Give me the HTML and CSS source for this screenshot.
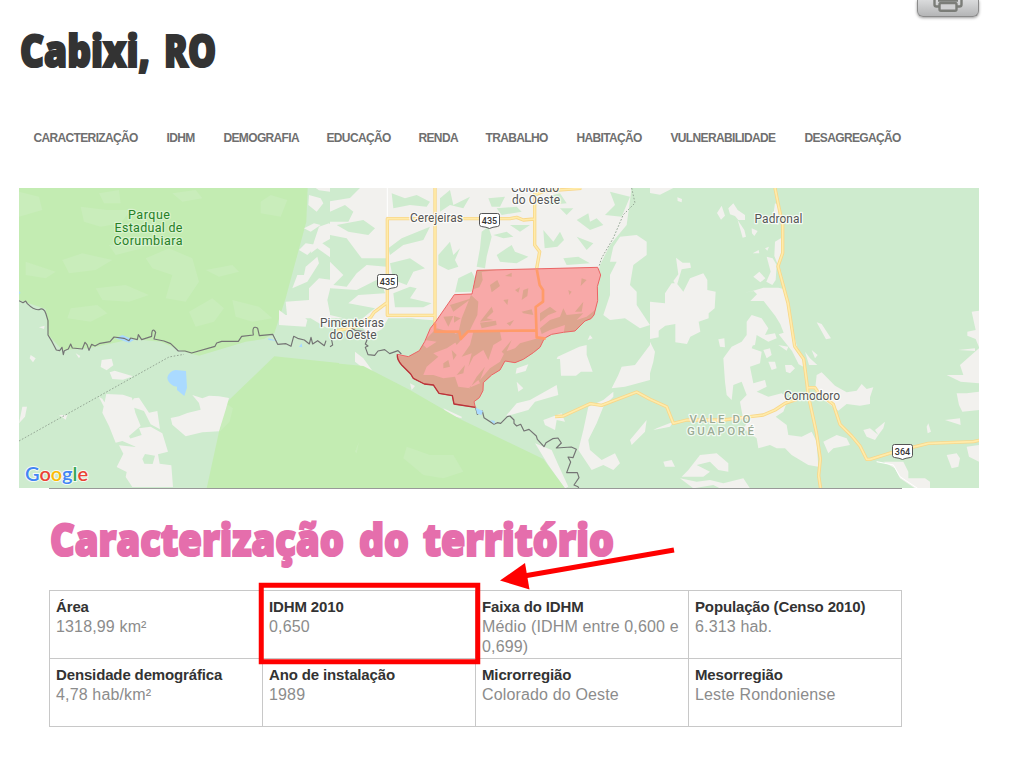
FILE: index.html
```html
<!DOCTYPE html>
<html lang="pt-BR">
<head>
<meta charset="utf-8">
<title>Cabixi, RO</title>
<link rel="stylesheet" href="styles.css">
</head>
<body>
<div class="page">
  <header class="header">
    <h1 class="title"><svg width="220" height="60"><text y="44"><tspan x="1" textLength="130" lengthAdjust="spacingAndGlyphs">Cabixi,</tspan> <tspan x="145" textLength="52" lengthAdjust="spacingAndGlyphs">RO</tspan></text></svg></h1>
    <button class="print" aria-label="Imprimir">
      <svg width="30" height="16" viewBox="0 0 30 16"><path d="M1.500 0v4.500q0 2 2 2H7M28.500 0v4.500q0 2-2 2H23M5 .5h20" /><rect x="6.500" y="3" width="17" height="7.800" rx="1.500"/></svg>
    </button>
  </header>
  <nav class="nav">
    <a>CARACTERIZAÇÃO</a><a>IDHM</a><a>DEMOGRAFIA</a><a>EDUCAÇÃO</a><a>RENDA</a><a>TRABALHO</a><a>HABITAÇÃO</a><a>VULNERABILIDADE</a><a>DESAGREGAÇÃO</a>
  </nav>
  <svg class="map" width="960" height="300" viewBox="19 188 960 300">
    <defs>
      <clipPath id="area-clip"><path d="M261 31L623 22 632 45 622 80 623 122 612 165 603 176 585 183 555 213 520 217 485 223 463 235 450 262 430 278 400 298 375 308 345 303 330 330 305 345 280 368 279 392 268 413 252 425 256 442 192 432 187 407 147 400 130 375 103 372 70 355 62 342 35 315Q20 298 22 283L55 290 88 272 104 245 121 205 137 185 193 104 246 102Z"/></clipPath>
    </defs>
    <rect class="forest" x="19" y="188" width="960" height="300"/>
    <!-- west -->
    <g transform="translate(19 185) scale(.33333)">
      <path class="park" d="M0 9H866L862 110 835 210 800 340 766 445 735 462 680 470 540 512 495 500 425 470 340 462 210 490 130 495 88 450 80 372 0 345Z"/>
      <path class="park" d="M766 514L960 534V910H563L600 740 620 655Z"/>
      <path class="parklight" d="M185 65l80 10 70 0-30 40-60 10-50-15zM0 20l60 15 10 40-70 20zM130 225l60-20 90 20-50 30-80 10zM380 220l70-30 70 30 20 70-40 60-60-10 20-70-60-20zM230 310l90-10 70 30-60 20-80-5zM155 370l80-10 30 25-50 25-70-10zM510 380l70-40 35 30-30 40-55 15zM640 345l80 20 40 35-60 10-50-15zM560 255l80-15 20 20-60 15zM725 50l30-20 50 15-20 50-60-10zM460 25l70-10 20 25-60 10zM20 230l90 30-30 20-60-10zM240 25l60-10 5 40-50 0zM270 180l100-10 0 20-80 20z"/>
      <path class="parklight" d="M620 655l22 15-10 40-30 30z"/>
      <path class="land" d="M870 30l35 10 8 15-20 25-25-20zM890 9h70v15l-60-8zM855 130l30-15 20 5-30 20zM900 125l30-10 25 20-10 20-35 20 50 35-15 15-50-35-20 15 10-35zM840 195l20-20 35 5-30 30zM860 245l35-30 5 20-35 55-45 20 15-40 20 0zM800 350l70-5 0-35 30-30 40 5-15 60 10 50-10 35-50-30-70 0zM780 375l20 15 40-5 25 20-5 20-80-5zM248 525l30-4 5 20-20 15-18-10zM272 562l15-5 55 17-30 10-32-2zM240 636l10 5 18 30-4 13zM262 627l50 2 27 9 10 45 16 40-35 30 15 30-35-15-20 5-20-50-20-40zM345 640l15-2 30 45 25-5 8 55-28-15-20-40-45-15zM320 765l48-15-8-20 35-5 35 20 17 55-30 8 5 28 35 5 5 65H340l-20-30 3-15-30-15 20-40-13-25 50 5zM520 630l30 10 20-8 30 2 30 5-10 35-20 65-50 3-50 12-40-35-5-20 25-5 25-10 40-10-5-20zM35 510l15 10-8 12-10-12zM10 665l14 0-6 30-18 20zM60 427l17-5-2 10zM120 690l25 0-5 14zM170 505l14 8-4 7z"/>
      <path class="forest" d="M370 822l8-15 30 5-7 25-25-1z"/>
      <path class="water" d="M445 578q5-20 25-23l31 3 3 50-8 25-22-18 0-10-10-2q-18-10-19-25zM290 460l20-10 35 15-15 8zM0 318l5 6-5 3zM840 485l8-10 2 12zM748 460l30 8-30-3z"/>
      <path class="boundary" d="M0 768L450 516 495 508"/>
      <path class="river" d="M0 347l12 6 8-5 5 8q20 20 35 18 15-8 21 13l6 20v43l12 20 13 25 10 2 7-10 4 22 3-12 12-5 7-15 5 12 30 3 8-20 6 7 6 17 8-18 10 5 15-8 30-5 12-14 30 4 15 7 5-8 20 5 3-15 10 15 30-10q0-30 12-12l-5 20 30 6 20 8 23 22h20l20 6 70-20 5-10 15-5h50l10-15 35-4q-5-32 13-20l5 22 40-4 15 30 25-2 15 8 8-30 12 6 20 5 15 12 5-20 5 20 15-10 20 15 5-15"/>
    </g>
    <!-- centre -->
    <g transform="translate(330 185) scale(.33333)">
      <path class="land" d="M0 9H960V25L910 60 890 130 840 200 812 245 740 380 500 420 230 400 140 440 125 460 90 420 60 400 0 400Z"/>
      <path class="forest" d="M0 9H90l-30 30-60 10zM0 80l45-20 25 20-15 30-55 0zM0 150l50 10 45 60 75 0v25l-60-5-30 25-30 40-40-5 30-30-40-40zM20 120l80-15 35 25-20 20-60-10zM0 310l80 5 70-35 15 45-80 5-30 25 80 15-50 40-85-20zM185 25l40 15 35-10 40 20-10 15-50-5-50 10zM175 190l40-30 85-35-20 40-60 15-40 30zM180 235l60-15 45 30-35 10-20 40-40-15zM190 325l50-20 20 5-20 30 65 15-25 12-85 0zM175 400h70l60 10-20 70-20 20-30 20-35-10-20-30-40-20zM330 40l30-25 10 45 50-25-20 35-40-10-30 20zM325 210l35-40 10 40 20-20-15 35 10 20-30 10-30-15zM385 280l40-20 10 20-10 40-50 2zM455 140l20-15 10 30-15 60-5 35-25-5 10-55zM475 40l50-5-15 30-25 0zM500 70l60-5 15 15-60 10zM490 150l40-10 20 15-30 5zM500 210l45-30 10 20 40 15-35 20-50-5zM540 120l60 0-30 20zM650 35l40-10 20 30-50 5zM640 135l30 35 20-30 12 25-20 20-38 5zM740 105l35-20 5 25 20-10 20 20-40 15zM740 155l50 20-20 20zM700 220l45-5 35 20-70 5zM840 20l60 15-25 60-50-5 30-30zM690 70l40 0-20 20z"/>
      <path class="forest" d="M905 9H960V400H770l20-50 10-60 10-50 30-60 50-60z"/>
      <path class="land" d="M870 155l50-5 30 20 0 40-40 30-10 60 20 20 0 40 40 60-30 10-45-30-45 5-20-15 20-60 0-60 20-40-20 0 10-45zM683 515l65-30 22-5 0 30 18 50-35 0-15 12-45 0-3-50-10 0zM530 690l30-35 40-10 80-45 5 30-70 20-20 25-65 18zM640 705l55-20 10 25-25-5-5 30-30-15zM560 550l35-12-8 20-30 8zM560 590l20 20-15 10zM845 610l20-40 10-25 40-5 45-60v105l-75 20zM760 735l15-70 45-20 30-25 0 15-30 30-20 50-25 50 5 30 35 30 40-20 15 30-20 20-30-15-35 15-40-60zM615 775l50 20 20 45 30 65-10 5-50-70zM75 500l25 20 40 55-40-25-25-20zM240 595l15 8-10 12zM900 765l50-60-5 35-40 40zM780 450l8 10-15 5zM340 670l55 25 0 5-40-10z"/>
      <path class="park" d="M0 533L100 543 240 615 390 702 640 822 705 910H0Z"/>
      <path class="parklight" d="M230 785l70 25 70 0 30 50-60 20-60-10-60-50zM75 800l12-30-7 35z"/>
      <path class="road roadw" d="M172 9V95"/>
      <path class="roadedge" d="M315 9V440M172 352V101H540l20-4 20 8 32-3M614 25V180l15 20-9 50M172 352V391H315M172 352l-40 30-10 15-50 30-50 10M614 30l30-12 110-8M675 695l25-2 80-37 35 5 105-40 40 22"/>
      <path class="road" d="M315 9V440M172 352V101H540l20-4 20 8 32-3M614 25V180l15 20-9 50M172 352V391H315M172 352l-40 30-10 15-50 30-50 10M614 30l30-12 110-8M675 695l25-2 80-37 35 5 105-40 40 22"/>
      <path class="boundary" d="M905 9l10 45-35 35-30 70-35 60-8 25"/>
      <path class="river" d="M0 485l8-5-3-15M65 430l10 6 28 4 10 10-2 15-5 12 8 6-8 4 8 22 20 2 10-13 20-4 15 12 25-9 10 10M437 668l5 20 15-10 5 20 30 20 10-5 10 2 20-20 8-2 12 12 0 10 8 8 12-5 10 20 15-5 22 20 3 10 20 22 6-12 20-12 16-2 10 15-15 15 45-3 15 7-10 25-15-2 8 15-12 32 32 0 5 15-15 22 12 5 10 20"/>
      <path class="water" d="M437 668l22 10-5 12-13-4zM480 705l15 3-2 10z"/>
    </g>
    <!-- municipality -->
    <g transform="translate(390 260) scale(.33333)">
      <g clip-path="url(#area-clip)">
        <rect class="areafill" width="660" height="465"/>
        <path class="areatex" d="M261 29L325 29 275 36 278 60 268 82 242 90zM243 105L265 125 262 165 240 210 200 255 185 225 205 218 215 175zM180 135L245 115 190 155zM160 170L190 168 175 200zM192 168L212 175 192 188zM300 75L322 60 330 78 305 97zM345 48L365 38 365 50zM375 90L390 82 385 98zM400 90L415 85 412 108 395 120zM340 120L355 118 352 135zM270 185L305 140 310 155 290 175 310 180zM270 188L318 182 320 195 275 205zM350 190L372 180 360 198zM395 155L425 148 430 165 400 160zM535 90L545 95 538 105zM575 55L590 60 572 78zM450 160L480 140 500 155 475 165 450 185zM450 205L480 180 510 170 520 145 530 165 580 160 560 180 590 170 640 130V230L520 225 525 195 480 210 455 222zM555 155L580 125 575 155zM140 205L195 220 200 245 170 265 130 280 145 290 110 320 100 345 130 345 160 355 195 350 205 380 240 385 260 350 285 320 270 360 300 325 330 305 345 275 375 265 390 250 460 230V320L360 320 300 380 285 450 190 465 0 380V285L55 290 100 255 110 265 140 245 105 240zM250 215L330 215 335 240 310 255 295 300 280 270 250 290 235 320 245 280 215 290 240 255zM185 270L200 285 190 300zM160 310L175 300 180 320 160 325zM200 345L225 315 220 340zM265 360L235 385 270 370zM335 275L365 240 345 285z"/>
      </g>
      <path class="areaborder" d="M261 31L623 22 632 45 622 80 623 122 612 165 603 176 585 183 555 213 520 217 485 223 463 235 450 262 430 278 400 298 375 308 345 303 330 330 305 345 280 368 279 392 268 413 252 425 256 442 192 432 187 407 147 400 130 375 103 372 70 355 62 342 35 315Q20 298 22 283L55 290 88 272 104 245 121 205 137 185 193 104 246 102Z"/>
      <path class="arearoad" d="M135 190V215H208L212 237 234 214 440 211M440 26L449 75 459 90V125L437 141 440 232 467 236"/>
      <path class="areashore" d="M22 283Q20 298 35 315L62 342 70 355 103 372 130 375 147 400 187 407 192 432 256 442"/>
    </g>
    <!-- east -->
    <g transform="translate(650 185) scale(.33333)">
      <path class="land" d="M0 9h70l-40 20-30-5zM82 37l14 5-1 10-12-4zM215 62l10 30-12 12-12-20zM235 70l15-15 13 20 22 15 0 15-20 0-10-12-15-5zM263 105l20 30 5 20-10 3zM305 130l18 8-10 15-7-8zM375 55l10 5 0 60-18-10zM375 170l20-12 0 50-12 30-10-25zM350 215l18 5 12 20-3 45-10 15-18-10 13-30zM345 190l12-5-5 12zM308 205l18-10 2 10zM310 275l18-15 18 20-15 12zM78 218l20 15 22 0 3 15-28 5-15 50-10-15 15-20zM0 350l45 5 0-30 20-30 15 0 20 25 20-40 40-15 12 20 0 30 25 5-3 50-18 15 0 15-30 10 5 30-30 15-10 22-35-5 0-55-30 5-20 15 0 20-26 5zM300 320l40-12 45 0 20 5 10 50 10 60 18 70 20 30 3 25-20-10-20-40-40-50 15-5-10-25-15-25-35-45-40 0 20-20-10-10-30 5zM290 410l15-20 30 10 20 30-10 20 30-5 5 15-25 10-35-20-5 30-25 5zM205 463l18-3 2 27-15-2zM220 520l25-35 30-15 15-20 25 15-10 25 30 10-5 35-30 10 10 50 35-10 5 20-30 15 35 15 40-10 20 15-15 40-30 20-30-10-60 15-10-55 20-20-15-40-25 10-5 45-15-15-5-40zM340 495l20-5 5 20-15 10zM355 530l20 0 5 20-15 5zM405 540l20 0 10 10-15 15-12-5zM385 480l30 5-5 12zM500 412l15 5 28 43-15 3zM465 500l15 20 22 20-25 0zM485 495l18 15-8 10zM500 570l15-8 20 20 20 20 35 20 30-5 15-20 15 15 20-5-10 30 0 20-30 5-40-5-25 20-40-30-30-30zM310 690l60 0 40 30 5 30 40 5 30-15 15 30 5 75-30-5-50-30-20-20-25 0-20-10-35 10-5-30-40-30zM520 770l40-20 30 10 10 20-50 10-15 15zM640 735l20-5 25 20-10 15-25-10zM675 735l30-25-5 20-15 20zM700 830l60 0 15 30 0 20 50 0 15 10v20h-45l-45-30-15-30zM920 625l30 0 37-5v55l-50 5-10-20zM890 570l50 0-10-30 45-40 12-10v105l-55-5zM925 495l50-5v8zM965 380l22-3v110l-10-25-25-10 0-12 25-5zM885 705l45-5 2 20zM890 810l30-5 10 15-5 25-20 5zM950 785l37-5v50l-30-15zM830 725l5-10 8 25-10 5zM0 470l15 30-5 30-10 35zM20 730l50-20-10 15-50 10zM150 810l50-5 35 30 0 25-30-5-25-25-40 10 40 20-20 15-65 0 20-20zM90 880l50 10 40-5 40 10 60-15 20 30h-90l-20-10-60 10zM40 830l25-5 10 20-30 0z"/>
      <path class="whiteway" d="M680 830l50 10 20 35 60 40"/>
      <path class="roadedge" d="M375 9l10 50 13 60v85l-14 40 30 110 20 130 27 38 10 75 3 30 25 115 12 80-5 50 6 40M475 608h20l10 15 45 35 20 60 35 35 25 30 20 40h10l75-23 100-25 135-5 22-5M440 643l-35 12-30 20-35 15-40 5-80 10-110 0-40 10-20-50-50-22"/>
      <path class="road" d="M375 9l10 50 13 60v85l-14 40 30 110 20 130 27 38 10 75 3 30 25 115 12 80-5 50 6 40M475 608h20l10 15 45 35 20 60 35 35 25 30 20 40h10l75-23 100-25 135-5 22-5M440 643l-35 12-30 20-35 15-40 5-80 10-110 0-40 10-20-50-50-22"/>
    </g>
    <g class="shield">
      <g transform="translate(479 213)"><path d="M2.500 .5h16q2 0 2 2v9q0 1.500-2 2-5 .5-8 2-3-1.500-8-2-2-.5-2-2v-9q0-2 2-2z"/><text x="10.500" y="11">435</text></g>
      <g transform="translate(377 274)"><path d="M2.500 .5h16q2 0 2 2v9q0 1.500-2 2-5 .5-8 2-3-1.500-8-2-2-.5-2-2v-9q0-2 2-2z"/><text x="10.500" y="11">435</text></g>
      <g transform="translate(892 444)"><path d="M2.500 .5h16q2 0 2 2v9q0 1.500-2 2-5 .5-8 2-3-1.500-8-2-2-.5-2-2v-9q0-2 2-2z"/><text x="10.500" y="11">364</text></g>
    </g>
    <g class="place">
      <g class="parkname"><text x="149" y="219" textLength="42">Parque</text><text x="148.500" y="232" textLength="68">Estadual de</text><text x="148" y="245" textLength="69">Corumbiara</text></g>
      <text x="436.500" y="222" textLength="53">Cerejeiras</text>
      <text x="535" y="192" textLength="48">Colorado</text><text x="536" y="204" textLength="48">do Oeste</text>
      <text x="352" y="327" textLength="64">Pimenteiras</text><text x="353" y="339" textLength="47">do Oeste</text>
      <text x="778.500" y="223" textLength="48">Padronal</text>
      <text x="812" y="400" textLength="56">Comodoro</text>
      <g class="region"><text x="720" y="423" textLength="61">VALE DO</text><text x="720.500" y="435" textLength="67">GUAPORÉ</text></g>
    </g>
    <text class="google" x="25" y="481" textLength="63"><tspan fill="#4285f4">G</tspan><tspan fill="#ea4335">o</tspan><tspan fill="#fbbc05">o</tspan><tspan fill="#4285f4">g</tspan><tspan fill="#34a853">l</tspan><tspan fill="#ea4335">e</tspan></text>
  </svg>
  <main class="content">
    <h2 class="heading"><svg width="580" height="70"><text y="49"><tspan x="1" textLength="294" lengthAdjust="spacingAndGlyphs">Caracterização</tspan> <tspan x="310" textLength="50" lengthAdjust="spacingAndGlyphs">do</tspan> <tspan x="374" textLength="191" lengthAdjust="spacingAndGlyphs">território</tspan></text></svg></h2>
    <div class="facts">
      <div class="cell"><b>Área</b><span>1318,99 km²</span></div>
      <div class="cell"><b>IDHM 2010</b><span>0,650</span></div>
      <div class="cell"><b>Faixa do IDHM</b><span>Médio (IDHM entre 0,600 e 0,699)</span></div>
      <div class="cell"><b>População (Censo 2010)</b><span>6.313 hab.</span></div>
      <div class="cell"><b>Densidade demográfica</b><span>4,78 hab/km²</span></div>
      <div class="cell"><b>Ano de instalação</b><span>1989</span></div>
      <div class="cell"><b>Microrregião</b><span>Colorado do Oeste</span></div>
      <div class="cell"><b>Mesorregião</b><span>Leste Rondoniense</span></div>
    </div>
  </main>
  <svg class="annotation" width="430" height="130" viewBox="250 540 430 130">
    <rect x="261.250" y="585.250" width="216.500" height="76.500"/>
    <path d="M674 550L524 576"/>
    <path class="tip" d="M500 580.500L525 563 529.500 589.500Z"/>
  </svg>
</div>
</body>
</html>
```
FILE: styles.css
```css
* { box-sizing: border-box; }
body { margin: 0; background: #fff; font-family: "Liberation Sans", Arial, sans-serif; }
.page { position: relative; width: 1025px; height: 767px; padding-left: 19px; overflow: hidden; }
.header { display: flex; justify-content: space-between; align-items: flex-start; width: 960px; height: 128px; }
.title, .heading { margin: 0; line-height: 0; }
.title svg, .heading svg { display: block; overflow: visible; font-family: "Open Sans", sans-serif; font-weight: 800; }
.title { padding-top: 23px; }
.title text { font-size: 45px; fill: #333; stroke: #333; stroke-width: 2.2px; }
.heading text { font-size: 45px; fill: #e56eac; stroke: #e56eac; stroke-width: 2.2px; }
.print { width: 62px; height: 17px; padding: 0; border: 1px solid #8b8b8b; border-top: 0; border-radius: 0 0 6px 6px; background: linear-gradient(#dadbdc, #b4b5b6); box-shadow: 0 1px 3px #999; display: flex; justify-content: center; }
.print svg { fill: none; stroke: #7b7d78; stroke-width: 2.4; }
.print rect { fill: #d0d1d2; }
.nav { display: grid; grid-template-columns: 133px 57px 103px 92px 67px 91px 94px 134px 100px; height: 60px; padding-left: 14.5px; font-size: 12px; font-weight: bold; line-height: 20px; letter-spacing: -.65px; color: #6f6f6f; white-space: nowrap; }
.map { display: block; font-family: Roboto, sans-serif; }
.forest { fill: #ceebce; }
.park { fill: #c3ecb2; }
.parklight { fill: #c9edbb; }
.land { fill: #f2f1ee; }
.water { fill: #aadaff; }
.river, .boundary, .road, .roadedge, .whiteway { fill: none; stroke-linejoin: round; }
.river { stroke: #747474; stroke-width: 3.5; }
.boundary { stroke: #96a896; stroke-width: 3; stroke-dasharray: 5 5; }
.roadedge { stroke: #f8d78a; stroke-width: 10; }
.road { stroke: #ffebaa; stroke-width: 5; }
.whiteway, .roadw { stroke: #fff; stroke-width: 3; }
.areafill { fill: #f8a9a8; }
.areaborder { fill: none; stroke: #ea6464; stroke-width: 3; stroke-linejoin: round; }
.areatex { fill: #dda58f; }
.arearoad { fill: none; stroke: #ff9b69; stroke-width: 8; stroke-linejoin: round; }
.areashore { fill: none; stroke: #b8343a; stroke-width: 4; stroke-linejoin: round; }
.shield path { fill: #fff; stroke: #555; }
.shield text { font-size: 9px; font-weight: 500; text-anchor: middle; fill: #333; }
.place { font-size: 12px; text-anchor: middle; fill: #555; stroke: #fff; stroke-width: 2.5px; stroke-opacity: .75; stroke-linejoin: round; paint-order: stroke; }
.parkname { font-size: 12.5px; fill: #278027; stroke: #e0f5d8; }
.region { fill: #9cac96; font-size: 11.5px; font-weight: 500; }
.google { font-family: Lato, sans-serif; font-size: 20px; font-weight: 600; stroke: #fff; stroke-opacity: .8; stroke-width: 2px; paint-order: stroke; }
.content { width: 853px; margin-left: 30px; border-top: 1px solid #999; }
.heading { height: 101px; padding-top: 18px; }
.facts { display: grid; grid-template-columns: repeat(4, 213px); grid-auto-rows: 68px; width: 853px; border-left: 1px solid #c8c8c8; border-top: 1px solid #c8c8c8; }
.cell { padding: 6px 0 0 6px; border-right: 1px solid #c8c8c8; border-bottom: 1px solid #c8c8c8; line-height: 20px; }
.cell b { display: block; font-size: 15px; letter-spacing: -.14px; color: #333; }
.cell span { display: block; font-size: 16px; letter-spacing: .15px; color: #8c8c8c; }
.annotation { position: absolute; left: 250px; top: 540px; fill: none; stroke: #f00; stroke-width: 5; }
.annotation .tip { fill: #f00; stroke: none; }
```
